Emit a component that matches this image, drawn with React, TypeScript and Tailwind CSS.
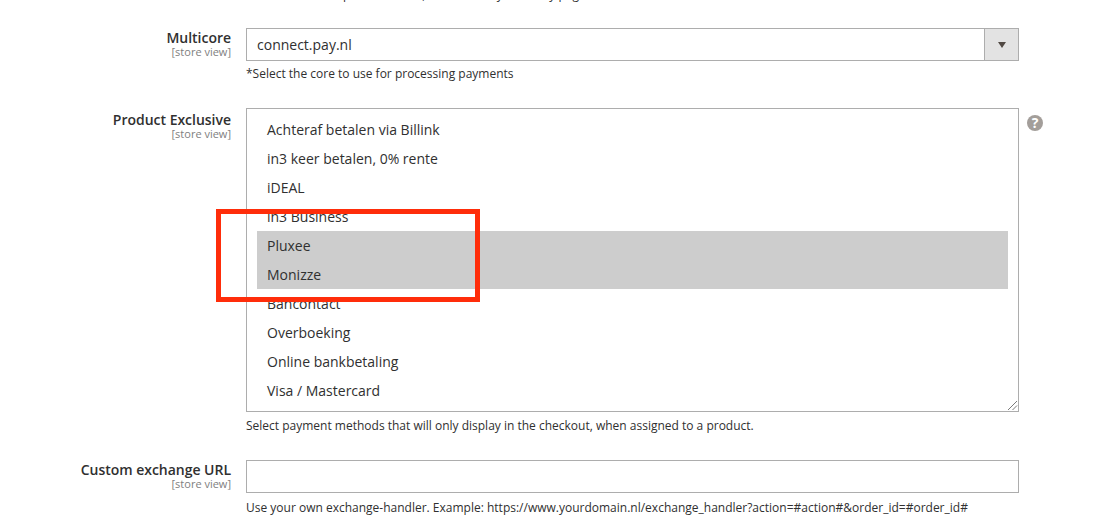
const font = "font-['Open_Sans',sans-serif]";

function Label({ title, className }: { title: string; className: string }) {
  return (
    <div className={`w-[231px] shrink-0 text-right ${className}`}>
      <div className="text-[14px] leading-[19px] font-semibold text-[#303030] tracking-[-0.02px]">{title}</div>
      <div className="text-[11px] leading-[11px] text-[#808080] mt-[-1px]">[store view]</div>
    </div>
  );
}

const options = [
  "Achteraf betalen via Billink",
  "in3 keer betalen, 0% rente",
  "iDEAL",
  "in3 Business",
  "Pluxee",
  "Monizze",
  "Bancontact",
  "Overboeking",
  "Online bankbetaling",
  "Visa / Mastercard",
];

export default function App() {
  return (
    <div className={`relative w-[1096px] h-[530px] overflow-hidden bg-white ${font}`}>
      <div className="h-[28px] pl-[246px] text-[12px] leading-[16px] text-[#303030] mt-[-13px] mb-[13px] whitespace-nowrap">
        Choose one core per store view, or as used by all in any page
      </div>
      <div className="flex h-[80px]">
        <Label title="Multicore" className="pt-0" />
        <div className="ml-[15px] w-[773px]">
          <div className="flex h-[33px] border border-[#adadad] bg-white">
            <div className="flex-1 pl-[10px] text-[14px] leading-[31px] text-[#303030]">connect.pay.nl</div>
            <div className="w-[34px] border-l border-[#adadad] bg-[#e3e3e3] flex items-center justify-center">
              <svg width="10" height="6" viewBox="0 0 10 6"><path d="M1 0h8L5 6z" fill="#514943" /></svg>
            </div>
          </div>
          <div className="mt-[5px] text-[12px] leading-[16px] text-[#303030]">*Select the core to use for processing payments</div>
        </div>
      </div>
      <div className="flex h-[352px]">
        <Label title="Product Exclusive" className="pt-[2px]" />
        <div className="ml-[15px] w-[773px]">
          <div className="relative h-[304px] border border-[#adadad] bg-white pl-[10px] pr-[10px] pt-[6px]">
            {options.map((o, i) => (
              <div
                key={o}
                className={`h-[29px] pl-[10px] text-[14px] leading-[29px] text-[#303030] ${i === 4 || i === 5 ? "bg-[#cdcdcd]" : ""}`}
              >
                {o}
              </div>
            ))}
            <svg className="absolute right-0 bottom-0" width="12" height="12" viewBox="0 0 12 12">
              <path d="M2 11L11 2M6.5 11L11 6.5" stroke="#7a7a7a" strokeWidth="1" fill="none" />
            </svg>
          </div>
          <div className="mt-[6px] text-[12px] leading-[16px] text-[#303030]">
            Select payment methods that will only display in the checkout, when assigned to a product.
          </div>
        </div>
        <div className="ml-[8px] mt-[7px] w-[16px] h-[16px] rounded-full bg-[#a39e9a] text-white text-[14px] leading-[16px] font-bold text-center">?</div>
      </div>
      <div className="flex">
        <Label title="Custom exchange URL" className="pt-0" />
        <div className="ml-[15px] w-[773px]">
          <div className="h-[33px] border border-[#adadad] bg-white" />
          <div className="mt-[7px] text-[12px] leading-[16px] text-[#303030] whitespace-nowrap">
            Use your own exchange-handler. Example: https://www.yourdomain.nl/exchange_handler?action=#action#&amp;order_id=#order_id#
          </div>
        </div>
      </div>
      <div className="absolute left-[216px] top-[209px] w-[264px] h-[93px] border-[5px] border-[#ff2d0a]" />
    </div>
  );
}
